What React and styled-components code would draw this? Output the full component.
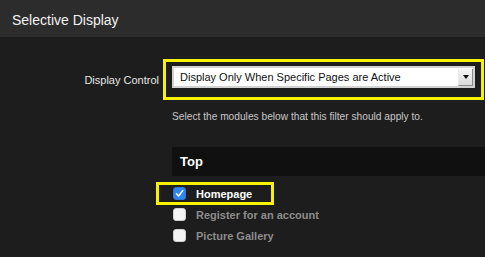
import React, { useState } from "react";
import styled, { createGlobalStyle } from "styled-components";

const Global = createGlobalStyle`
  html, body {
    margin: 0;
    padding: 0;
    background: #1d1d1d;
  }
  body {
    font-family: "Liberation Sans", Arial, sans-serif;
  }
`;

const Page = styled.div`
  width: 485px;
  height: 257px;
  overflow: hidden;
  background: #1d1d1d;
`;

const Header = styled.div`
  height: 37px;
  display: flex;
  align-items: center;
  padding: 2px 0 0 12px;
  box-sizing: border-box;
  background: #2c2c2c;
  color: #f2f2f2;
  font-size: 14px;
`;

const Body = styled.div`
  padding-top: 22px;
`;

const FieldRow = styled.div`
  display: flex;
  align-items: center;
`;

const Label = styled.div`
  width: 159px;
  margin-right: 4px;
  text-align: right;
  color: #e6e6e6;
  font-size: 11px;
  padding-top: 1px;
`;

const Highlight = styled.div`
  border: 3px solid #f6f200;
  padding: 4px 6px 9px 6px;
`;

const SelectBox = styled.div`
  width: 293px;
  height: 18px;
  display: flex;
  align-items: center;
  justify-content: space-between;
  background: #fff;
  border: 2px solid #d2d2d2;
  color: #111;
  font-size: 11px;
  padding-left: 6px;
  box-sizing: content-box;
`;

const ArrowButton = styled.div`
  width: 13px;
  height: 16px;
  display: flex;
  align-items: center;
  justify-content: center;
  background: linear-gradient(#f6f6f6, #dcdcdc);
  border-right: 1px solid #8a8a8a;
  border-bottom: 1px solid #8a8a8a;
  border-left: 1px solid #e8e8e8;
`;

const Arrow = styled.div`
  width: 0;
  height: 0;
  border-left: 3px solid transparent;
  border-right: 3px solid transparent;
  border-top: 4px solid #111;
`;

const Hint = styled.div`
  margin: 11px 0 0 172px;
  color: #c8c8c8;
  font-size: 10.2px;
`;

const SectionBar = styled.div`
  margin: 25px 0 0 172px;
  height: 29px;
  display: flex;
  align-items: center;
  padding-left: 8px;
  background: #101010;
  color: #fff;
  font-weight: bold;
  font-size: 13px;
`;

const List = styled.div`
  margin: 7px 0 0 157px;
  display: flex;
  flex-direction: column;
  align-items: flex-start;
`;

const Item = styled.label`
  display: flex;
  align-items: center;
  height: 21px;
  padding: 0 21px 0 16px;
  gap: 10px;
  color: ${(p) => (p.$on ? "#ffffff" : "#8c8c8c")};
  font-weight: bold;
  font-size: 11px;
  cursor: pointer;
  outline: ${(p) => (p.$marked ? "3px solid #f6f200" : "none")};
  outline-offset: -2px;
`;

const Box = styled.span`
  width: 13px;
  height: 13px;
  border-radius: 3px;
  display: flex;
  align-items: center;
  justify-content: center;
  background: ${(p) => (p.$on ? "#2f86f0" : "#f4f4f4")};
  border: 1px solid ${(p) => (p.$on ? "#2a74d6" : "#cfcfcf")};
  box-sizing: border-box;
`;

const Check = () => (
  <svg width="9" height="9" viewBox="0 0 8 8">
    <path d="M1.3 4.3 L3.2 6.2 L6.8 1.5" fill="none" stroke="#fff" strokeWidth="1.3" strokeLinecap="round" strokeLinejoin="round" />
  </svg>
);

const pages = ["Homepage", "Register for an account", "Picture Gallery"];

const App = () => {
  const [checked, setChecked] = useState({ Homepage: true });

  const toggle = (name) => setChecked((c) => ({ ...c, [name]: !c[name] }));

  return (
    <Page>
      <Global />
      <Header>Selective Display</Header>
      <Body>
        <FieldRow>
          <Label>Display Control</Label>
          <Highlight>
            <SelectBox>
              Display Only When Specific Pages are Active
              <ArrowButton>
                <Arrow />
              </ArrowButton>
            </SelectBox>
          </Highlight>
        </FieldRow>
        <Hint>Select the modules below that this filter should apply to.</Hint>
        <SectionBar>Top</SectionBar>
        <List>
          {pages.map((name, i) => (
            <Item key={name} $on={!!checked[name]} $marked={i === 0} onClick={() => toggle(name)}>
              <Box $on={!!checked[name]}>{checked[name] && <Check />}</Box>
              {name}
            </Item>
          ))}
        </List>
      </Body>
    </Page>
  );
};

export default App;
